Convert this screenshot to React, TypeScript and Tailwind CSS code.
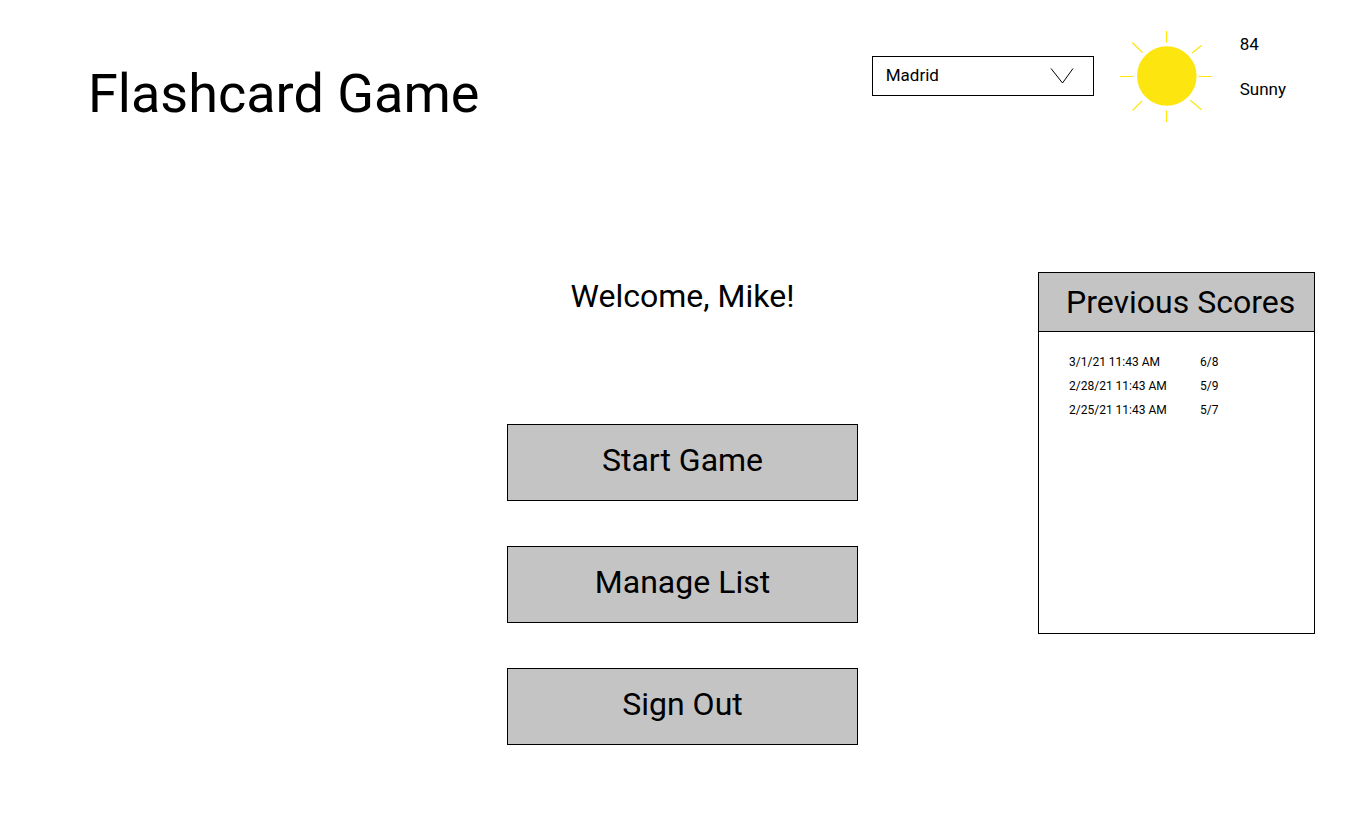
const scores = [
  { date: "3/1/21 11:43 AM", score: "6/8" },
  { date: "2/28/21 11:43 AM", score: "5/9" },
  { date: "2/25/21 11:43 AM", score: "5/7" },
];

function Sun() {
  return (
    <svg width="92" height="92" viewBox="0 0 92 92" aria-hidden="true" className="shrink-0">
      <circle cx="46.8" cy="45" r="29.8" fill="#FDE510" />
      <path
        d="M46.5 0V11.5M46.5 79.5V91M0 45.5H13.5M78.5 45.5H92M12.3 11.5L22.5 21.5M72 22L81.5 14.5M12.5 79.5L22 70M70.3 69.3L81.5 78.8"
        stroke="#FDE510"
        strokeWidth="1.2"
        fill="none"
      />
    </svg>
  );
}

function MenuButton({ children }: { children: string }) {
  return (
    <button
      type="button"
      className="h-[77px] w-full border border-black bg-[#c4c4c4] pb-1.5 text-[32px] leading-10"
    >
      {children}
    </button>
  );
}

export default function App() {
  return (
    <div className="min-h-screen bg-white font-['Roboto',sans-serif] text-black antialiased">
      <header className="flex items-start justify-between pt-[31px] pr-[82px] pl-[88px]">
        <h1 className="pt-8 text-[54px] leading-[62px]">Flashcard Game</h1>
        <div className="flex items-start">
          <div className="relative mt-[25px] mr-[26px]">
            <select
              aria-label="City"
              defaultValue="Madrid"
              className="block h-10 w-[222px] appearance-none border border-black bg-white px-[13px] text-[17px]"
            >
              <option>Madrid</option>
            </select>
            <svg
              width="24"
              height="16"
              viewBox="0 0 24 16"
              aria-hidden="true"
              className="pointer-events-none absolute top-3 right-5"
            >
              <path d="M1 0.5L12.5 15L23 0.5" stroke="black" fill="none" />
            </svg>
          </div>
          <Sun />
          <div className="ml-7 flex flex-col gap-[25px] pt-[3px] text-[17px] leading-5">
            <span>84</span>
            <span>Sunny</span>
          </div>
        </div>
      </header>

      <div className="grid grid-cols-[1fr_351px_1fr] pt-[147px] pr-[3px]">
        <main className="col-start-2 flex flex-col items-center">
          <h2 className="pt-1 text-[32px] leading-10">Welcome, Mike!</h2>
          <nav aria-label="Game menu" className="flex w-full flex-col gap-[45px] pt-[108px]">
            <MenuButton>Start Game</MenuButton>
            <MenuButton>Manage List</MenuButton>
            <MenuButton>Sign Out</MenuButton>
          </nav>
        </main>
        <section
          aria-labelledby="scores-title"
          className="mr-[50px] h-[362px] w-[277px] justify-self-end border border-black"
        >
          <h2
            id="scores-title"
            className="h-[59px] border-b border-black bg-[#c4c4c4] pl-[27px] text-[32px] leading-[58px]"
          >
            Previous Scores
          </h2>
          <table className="mt-[18px] ml-[30px] text-left text-xs leading-6">
            <tbody>
              {scores.map(({ date, score }) => (
                <tr key={date}>
                  <td className="w-[131px] p-0">{date}</td>
                  <td className="p-0">{score}</td>
                </tr>
              ))}
            </tbody>
          </table>
        </section>
      </div>
    </div>
  );
}
